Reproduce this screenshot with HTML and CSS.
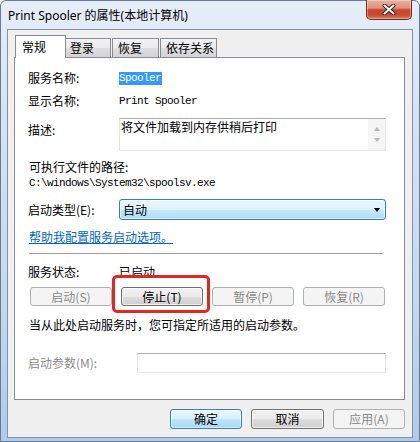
FILE: index.html
```html
<!DOCTYPE html>
<html>
<head>
<meta charset="utf-8">
<link rel="stylesheet" href="styles.css">
</head>
<body>
<div class="window">
  <div class="titlebar">
    <span class="title">Print Spooler 的属性(本地计算机)</span>
    <div class="close">
      <svg width="14" height="11" viewBox="0 0 14 11">
        <path d="M2.5 1.5 L11.5 9.5 M11.5 1.5 L2.5 9.5" stroke="#3b2323" stroke-width="4" stroke-linecap="round"/>
        <path d="M2.5 1.5 L11.5 9.5 M11.5 1.5 L2.5 9.5" stroke="#ffffff" stroke-width="2" stroke-linecap="round"/>
      </svg>
    </div>
  </div>
  <div class="client">
    <div class="tabs">
      <div class="tab active">常规</div>
      <div class="tab t2">登录</div>
      <div class="tab t3">恢复</div>
      <div class="tab t4">依存关系</div>
    </div>
    <div class="panel">
      <div class="row r1"><span class="label">服务名称:</span><span class="mono sel">Spooler</span></div>
      <div class="row r2"><span class="label">显示名称:</span><span class="mono">Print Spooler</span></div>
      <div class="row r3">
        <span class="label desc-label">描述:</span>
        <div class="textarea">
          <span class="ta-text">将文件加载到内存供稍后打印</span>
          <div class="scroll">
            <span class="arr up"></span>
            <span class="arr down"></span>
          </div>
        </div>
      </div>
      <div class="line r4">可执行文件的路径:</div>
      <div class="line mono r5">C:\windows\System32\spoolsv.exe</div>
      <div class="row r6">
        <span class="label">启动类型(E):</span>
        <div class="combo"><span>自动</span><span class="caret"></span></div>
      </div>
      <div class="line r7"><span class="link">帮助我配置服务启动选项。</span></div>
      <div class="sep"></div>
      <div class="row r8"><span class="label">服务状态:</span><span>已启动</span></div>
      <div class="svc-buttons">
        <div class="btn disabled">启动(S)</div>
        <div class="btn marked">停止(T)</div>
        <div class="btn disabled">暂停(P)</div>
        <div class="btn disabled">恢复(R)</div>
      </div>
      <div class="line r9">当从此处启动服务时，您可指定所适用的启动参数。</div>
      <div class="row r10">
        <span class="label param-label">启动参数(M):</span>
        <div class="input"></div>
      </div>
    </div>
    <div class="dlg-buttons">
      <div class="btn default w72">确定</div>
      <div class="btn w73">取消</div>
      <div class="btn disabled w72">应用(A)</div>
    </div>
  </div>
</div>
</body>
</html>
```

FILE: styles.css
```css
* {
  box-sizing: border-box;
  margin: 0;
  padding: 0;
}

body {
  margin: 0;
  width: 420px;
  height: 442px;
  overflow: hidden;
  font-family: "Noto Sans CJK SC", "Noto Sans", sans-serif;
  font-size: 12px;
  line-height: 16px;
  color: #000;
  background: #fff;
}

.window {
  width: 420px;
  height: 442px;
  display: flex;
  flex-direction: column;
  border: 1px solid #6a7b91;
  border-radius: 6px 6px 0 0;
  background: linear-gradient(180deg, #e6eef8 0%, #d6e3f2 25%, #c3d8ee 70%, #aecbea 100%);
}

.titlebar {
  height: 28px;
  display: flex;
  justify-content: space-between;
  align-items: flex-start;
  flex: none;
}

.title {
  margin: 7px 0 0 7px;
  font-family: "Noto Sans", "Noto Sans CJK SC", sans-serif;
  font-size: 12px;
  line-height: 16px;
  color: #000;
}

.close {
  margin: -1px 7px 0 0;
  width: 46px;
  height: 20px;
  border: 1px solid #6e2e22;
  border-top: none;
  border-radius: 0 0 5px 5px;
  background: linear-gradient(180deg, #eab1a3 0%, #df927e 42%, #c9462b 52%, #c84a30 78%, #dc7a5e 100%);
  box-shadow: inset 0 0 0 1px rgba(255, 255, 255, 0.35);
  display: flex;
  align-items: center;
  justify-content: center;
}

.client {
  flex: 1;
  margin: 0 6px 4px 6px;
  background: #f0f0f0;
  border: 1px solid #7f93aa;
  padding: 5px 7px 8px 6px;
  display: flex;
  flex-direction: column;
}

.tabs {
  display: flex;
  align-items: flex-end;
  margin-left: 1px;
  height: 22px;
  position: relative;
  z-index: 1;
}

.tab {
  height: 19px;
  border: 1px solid #898c95;
  border-bottom: none;
  background: linear-gradient(180deg, #f3f3f3 0%, #ebebeb 50%, #dedede 50%, #d4d4d4 100%);
  line-height: 17px;
  padding-left: 4px;
}

.tab.active {
  width: 51px;
  height: 23px;
  margin-bottom: -1px;
  background: #fff;
  padding-left: 6px;
  line-height: 21px;
  position: relative;
  z-index: 2;
}

.t2 { width: 46px; margin-left: -1px; }
.t3 { width: 47px; margin-left: 1px; padding-left: 5px; }
.t4 { width: 57px; margin-left: 1px; padding-left: 5px; }

.panel {
  height: 343px;
  border: 1px solid #898c95;
  background: #fff;
  padding: 12px 18px 0 13px;
  display: flex;
  flex-direction: column;
  flex: none;
}

.row {
  display: flex;
  align-items: center;
}

.label {
  width: 91px;
  flex: none;
  line-height: 16px;
}

.mono {
  font-family: "Liberation Mono", "DejaVu Sans Mono", monospace;
  font-size: 11px;
  letter-spacing: -0.6px;
  line-height: 16px;
}

.sel {
  background: #3399ff;
  color: #fff;
  line-height: 13px;
  padding-right: 1px;
}

.r1 { height: 16px; }
.r2 { height: 16px; margin-top: 7px; }

.r3 {
  margin-top: 9px;
  align-items: flex-start;
}

.desc-label { margin-top: 4px; }

.textarea {
  width: 267px;
  height: 33px;
  border: 1px solid #abadb3;
  border-right-color: #e3e9ef;
  border-bottom-color: #e3e9ef;
  border-left-color: #e2e3ea;
  border-top-color: #abadb3;
  display: flex;
  justify-content: space-between;
}

.ta-text {
  padding-left: 1px;
  line-height: 15px;
}

.scroll {
  width: 17px;
  height: 31px;
  background: #f5f5f5;
  display: flex;
  flex-direction: column;
  align-items: center;
  justify-content: space-around;
  padding: 4px 0;
}

.arr {
  width: 0;
  height: 0;
  border-left: 3.5px solid transparent;
  border-right: 3.5px solid transparent;
}

.arr.up { border-bottom: 4px solid #b8b8b8; }
.arr.down { border-top: 4px solid #b8b8b8; }

.line {
  line-height: 16px;
  padding-left: 1px;
}

.r4 { margin-top: 8px; }
.r5 { margin-top: 0; }

.r6 { margin-top: 8px; }

.combo {
  width: 268px;
  height: 21px;
  border: 1px solid #3c7fb1;
  border-radius: 3px;
  background: linear-gradient(180deg, #ecf7fd 0%, #dcf1fc 50%, #c4e8fd 51%, #aedcf6 100%);
  box-shadow: inset 0 0 0 1px rgba(255, 255, 255, 0.55);
  display: flex;
  justify-content: space-between;
  align-items: center;
  padding: 0 5px 0 3px;
  line-height: 16px;
}

.caret {
  width: 0;
  height: 0;
  border-left: 3.5px solid transparent;
  border-right: 3.5px solid transparent;
  border-top: 4px solid #000;
}

.r7 { margin-top: 9px; }

.link {
  color: #0066cc;
  text-decoration: underline;
}

.sep {
  margin: 8px 3px 0 1px;
  height: 1px;
  background: #a0a0a0;
}

.r8 { margin-top: 10px; height: 16px; }

.svc-buttons {
  margin: 7px 1px 0 2px;
  display: grid;
  grid-template-columns: repeat(4, 1fr);
  column-gap: 9px;
}

.btn {
  height: 19px;
  border: 1px solid #707070;
  border-radius: 3px;
  background: linear-gradient(180deg, #f2f2f2 0%, #ebebeb 50%, #dddddd 51%, #cfcfcf 100%);
  box-shadow: inset 0 0 0 1px rgba(255, 255, 255, 0.7);
  text-align: center;
  line-height: 17px;
  font-size: 12px;
  color: #000;
}

.btn.disabled {
  border-color: #adb2b5;
  background: #f4f4f4;
  box-shadow: none;
  color: #8a8a8a;
}

.btn.marked {
  position: relative;
}

.btn.marked::after {
  content: "";
  position: absolute;
  top: -13px;
  bottom: -8px;
  left: -10px;
  right: -8px;
  border: 3px solid #e3261f;
  border-radius: 5px;
}

.btn.default {
  border-color: #3c7fb1;
  background: linear-gradient(180deg, #eaf6fd 0%, #d9f0fc 50%, #bee6fd 51%, #a7d9f5 100%);
  box-shadow: inset 0 0 0 1px rgba(255, 255, 255, 0.5);
}

.r9 { margin-top: 11px; }

.r10 { margin-top: 20px; }

.param-label {
  width: 109px;
  color: #8d8d8d;
}

.input {
  width: 249px;
  height: 20px;
  border: 1px solid #abadb3;
  border-left-color: #e2e3ea;
  border-right-color: #dbdfe6;
  border-bottom-color: #e3e9ef;
  background: #fff;
}

.dlg-buttons {
  margin-top: 9px;
  display: flex;
  justify-content: flex-end;
  gap: 9px;
}

.dlg-buttons .btn {
  height: 20px;
  line-height: 18px;
}

.w72 { width: 72px; }
.w73 { width: 73px; }
```
